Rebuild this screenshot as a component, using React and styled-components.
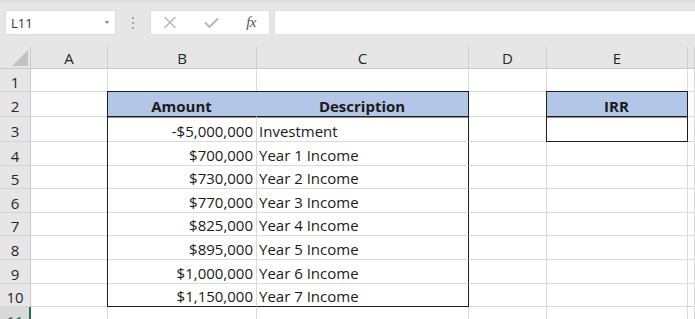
import React from "react";
import styled, { createGlobalStyle } from "styled-components";

const GlobalStyle = createGlobalStyle`
  body {
    margin: 0;
    background: #ffffff;
    font-family: "Open Sans", "Noto Sans", sans-serif;
  }
`;

const Page = styled.div`
  width: 695px;
  height: 319px;
  overflow: hidden;
  display: flex;
  flex-direction: column;
  background: #e6e6e6;
`;

const FormulaBar = styled.div`
  flex-shrink: 0;
  height: 47px;
  box-sizing: border-box;
  padding: 10px 0 12px 5px;
  display: flex;
  align-items: stretch;
  background: linear-gradient(#d9d9d9 0px, #e6e6e6 4px);
`;

const NameBox = styled.div`
  width: 111px;
  box-sizing: border-box;
  background: #fff;
  border: 1px solid #dddddd;
  display: flex;
  align-items: center;
  justify-content: space-between;
  padding: 0 6px 0 5px;
  font-size: 13px;
  color: #333;
`;

const Caret = styled.span`
  width: 0;
  height: 0;
  border-left: 2.5px solid transparent;
  border-right: 2.5px solid transparent;
  border-top: 3px solid #808080;
`;

const Grip = styled.div`
  width: 34px;
  display: flex;
  flex-direction: column;
  align-items: center;
  justify-content: center;
  gap: 3px;
  span {
    width: 2px;
    height: 2px;
    background: #a6a6a6;
  }
`;

const FxBox = styled.div`
  width: 120px;
  box-sizing: border-box;
  background: #fff;
  border: 1px solid #e0e0e0;
  display: flex;
  align-items: center;
  padding: 0 13px 0 12px;
  justify-content: space-between;
`;

const Fx = styled.span`
  font-family: "Liberation Serif", "DejaVu Serif", serif;
  font-style: italic;
  font-size: 15px;
  color: #555;
  letter-spacing: -0.5px;
`;

const FormulaInput = styled.div`
  flex: 1;
  margin-left: 4px;
  background: #fff;
  border: 1px solid #e0e0e0;
  border-right: none;
`;

const Sheet = styled.div`
  flex: 1;
  min-height: 0;
  display: grid;
  grid-template-columns: 31px 77px 149px 212px 78px 141px 1fr;
  grid-auto-rows: min-content;
  background: #fff;
  font-size: 15px;
  color: #1a1a1a;
`;

const Corner = styled.div`
  height: 22px;
  box-sizing: border-box;
  background: #e6e6e6;
  border-right: 1px solid #c9c9c9;
  border-bottom: 1px solid #c9c9c9;
  display: flex;
  align-items: flex-end;
  justify-content: flex-end;
  padding: 0 2px 2px 0;
  i {
    width: 16px;
    height: 16px;
    background: #c2c2c2;
    clip-path: polygon(100% 0, 100% 100%, 0 100%);
  }
`;

const ColHead = styled.div`
  height: 22px;
  box-sizing: border-box;
  background: #e6e6e6;
  border-right: 1px solid #cfcfcf;
  border-bottom: 1px solid #c9c9c9;
  display: flex;
  align-items: center;
  justify-content: center;
  color: #262626;
  line-height: 20px;
`;

const RowHead = styled.div`
  height: ${p => p.$h}px;
  box-sizing: border-box;
  background: ${p => (p.$active ? "#d9d9d9" : "#e6e6e6")};
  border-right: 1px solid ${p => (p.$active ? "#217346" : "#c9c9c9")};
  box-shadow: ${p => (p.$active ? "inset -1px 0 0 #217346" : "none")};
  border-bottom: 1px solid #d4d4d4;
  display: flex;
  align-items: center;
  justify-content: center;
  padding-top: 4px;
  color: ${p => (p.$active ? "#217346" : "#262626")};
  line-height: 20px;
`;

const INK = "#1f1f1f";

const frameShadow = p => {
  const s = [];
  if (p.$l) s.push(`-1px 0 0 ${INK}`);
  if (p.$t) s.push(`0 -1px 0 ${INK}`);
  if (p.$l && p.$t) s.push(`-1px -1px 0 ${INK}`);
  if (p.$under) s.push(`inset 0 1px 0 #8f8f8f`);
  return s.length ? s.join(", ") : "none";
};

const Cell = styled.div`
  height: ${p => p.$h}px;
  box-sizing: border-box;
  display: flex;
  align-items: flex-end;
  justify-content: ${p =>
    p.$align === "right" ? "flex-end" : p.$align === "center" ? "center" : "flex-start"};
  padding: 0 3px 0 2px;
  line-height: 20px;
  white-space: nowrap;
  background: ${p => p.$fill || "#fff"};
  font-weight: ${p => (p.$bold ? 700 : 400)};
  border-right: 1px solid
    ${p => (p.$r ? INK : p.$joined ? p.$fill : "#dadada")};
  border-bottom: 1px solid ${p => (p.$b ? INK : "#dadada")};
  box-shadow: ${frameShadow};
`;

const BLUE = "#b4c6e7";
const COLS = ["A", "B", "C", "D", "E", "F"];

const flows = [
  ["-$5,000,000", "Investment"],
  ["$700,000", "Year 1 Income"],
  ["$730,000", "Year 2 Income"],
  ["$770,000", "Year 3 Income"],
  ["$825,000", "Year 4 Income"],
  ["$895,000", "Year 5 Income"],
  ["$1,000,000", "Year 6 Income"],
  ["$1,150,000", "Year 7 Income"],
];

const heights = [23, 25, 25, 24, 23, 24, 23, 24, 24, 23, 24];

function cellsFor(row) {
  const blank = {};
  const c = { A: blank, B: blank, C: blank, D: blank, E: blank, F: blank };
  if (row === 2) {
    c.B = { text: "Amount", $align: "center", $bold: true, $fill: BLUE, $joined: true, $t: true, $l: true, $b: true };
    c.C = { text: "Description", $align: "center", $bold: true, $fill: BLUE, $t: true, $r: true, $b: true };
    c.E = { text: "IRR", $align: "center", $bold: true, $fill: BLUE, $t: true, $l: true, $r: true, $b: true };
  } else if (row >= 3 && row <= 10) {
    const [amount, desc] = flows[row - 3];
    const last = row === 10;
    c.B = { text: amount, $align: "right", $l: true, $b: last, $under: row === 3 };
    c.C = { text: desc, $r: true, $b: last, $under: row === 3 };
    if (row === 3) c.E = { $l: true, $r: true, $b: true, $under: true };
  }
  return c;
}

export default function App() {
  return (
    <Page>
      <GlobalStyle />
      <FormulaBar>
        <NameBox>
          L11
          <Caret />
        </NameBox>
        <Grip>
          <span />
          <span />
          <span />
        </Grip>
        <FxBox>
          <svg width="14" height="13" viewBox="0 0 14 13">
            <path d="M1.5 1 L12.5 12 M12.5 1 L1.5 12" stroke="#b3b3b3" strokeWidth="1.2" fill="none" />
          </svg>
          <svg width="15" height="11" viewBox="0 0 15 11">
            <path d="M1 5.5 L5.5 10 L14 1.5" stroke="#b8b8b8" strokeWidth="2" fill="none" />
          </svg>
          <Fx>fx</Fx>
        </FxBox>
        <FormulaInput />
      </FormulaBar>

      <Sheet>
        <Corner>
          <i />
        </Corner>
        {COLS.map(col => (
          <ColHead key={col}>{col === "F" ? "" : col}</ColHead>
        ))}
        {heights.map((h, i) => {
          const row = i + 1;
          const cells = cellsFor(row);
          return (
            <React.Fragment key={row}>
              <RowHead $h={h} $active={row === 11}>
                {row}
              </RowHead>
              {COLS.map(col => {
                const { text, ...props } = cells[col];
                return (
                  <Cell key={col} $h={h} {...props}>
                    {text}
                  </Cell>
                );
              })}
            </React.Fragment>
          );
        })}
      </Sheet>
    </Page>
  );
}
